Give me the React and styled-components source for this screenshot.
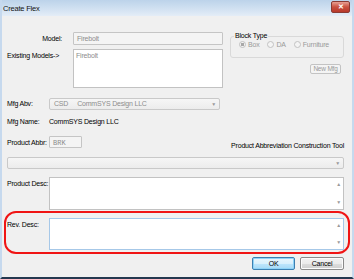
import React from 'react';
import styled, { createGlobalStyle } from 'styled-components';

const GlobalStyle = createGlobalStyle`
    body {
        margin: 0;
        font-family: "Liberation Sans", Arial, sans-serif;
        font-size: 7px;
        letter-spacing: -0.2px;
        background: #ffffff;
    }
`;

const Window = styled.div`
    width: 354px;
    height: 279px;
    box-sizing: border-box;
    display: flex;
    flex-direction: column;
    background: #f0f0f0;
    border-left: 2px solid #c6d9ee;
    border-right: 2px solid #c6d9ee;
    border-bottom: 2px solid #24384f;
    overflow: hidden;
    white-space: nowrap;
`;

const TitleBar = styled.div`
    height: 16px;
    flex: none;
    display: flex;
    align-items: center;
    justify-content: space-between;
    padding: 0 2px 0 1px;
    background: linear-gradient(#bcd3ea, #d3e2f2 60%, #e4edf7);
    font-size: 7.5px;
    color: #111;
`;

const CloseButton = styled.div`
    width: 17px;
    height: 10px;
    margin-top: -3px;
    border: 1px solid #8a3b34;
    border-radius: 2px;
    background: linear-gradient(#e8a093, #c9503f 50%, #b8382a);
    color: #fff;
    font-size: 7px;
    font-weight: bold;
    line-height: 10px;
    text-align: center;
`;

const Body = styled.div`
    flex: 1;
    display: flex;
    flex-direction: column;
    padding: 16px 8px 0 5px;
`;

const TopSection = styled.div`
    display: flex;
    gap: 7px;
`;

const LeftColumn = styled.div`
    display: flex;
    flex-direction: column;
    gap: 4px;
`;

const RightColumn = styled.div`
    flex: 1;
    display: flex;
    flex-direction: column;
    align-items: flex-end;
`;

const Row = styled.div`
    display: flex;
    align-items: ${p => p.$align || 'center'};
    margin-top: ${p => p.$top || 0}px;
`;

const Label = styled.div`
    width: ${p => p.$width || 42}px;
    flex: none;
    text-align: ${p => p.$right ? 'right' : 'left'};
    padding-right: ${p => p.$right ? 11 : 0}px;
    box-sizing: border-box;
    color: #000;
    line-height: 10px;
    align-self: ${p => p.$top ? 'flex-start' : 'auto'};
    padding-top: ${p => p.$top ? 2 : 0}px;
`;

const PlainText = styled.span`
    color: #000;
    line-height: 10px;
`;

const TextField = styled.div`
    width: ${p => p.$width}px;
    height: ${p => p.$height || 13}px;
    box-sizing: border-box;
    border: 1px solid #c5c5c5;
    border-radius: 1px;
    background: #f4f4f4;
    color: #8d8d8d;
    padding: 1px 3px;
    line-height: 10px;
    font-family: ${p => p.$mono ? '"Liberation Mono", monospace' : 'inherit'};
    letter-spacing: ${p => p.$mono ? '0' : 'inherit'};
`;

const TextArea = styled.div`
    width: ${p => p.$width ? `${p.$width}px` : 'auto'};
    flex: ${p => p.$width ? 'none' : 1};
    height: ${p => p.$height}px;
    box-sizing: border-box;
    border: 1px solid ${p => p.$focus ? '#a6c8e8' : '#c2c2c2'};
    background: #ffffff;
    color: #8d8d8d;
    padding: 1px 2px;
    line-height: 10px;
    display: flex;
`;

const AreaText = styled.div`
    flex: 1;
`;

const ScrollBar = styled.div`
    width: 9px;
    margin: -1px -2px -1px 0;
    display: flex;
    flex-direction: column;
    justify-content: space-between;
    align-items: center;
    padding: 4px 0 4px;
    color: #9a9a9a;
    font-size: 5px;
    line-height: 5px;
`;

const Select = styled.div`
    width: ${p => p.$width ? `${p.$width}px` : 'auto'};
    flex: ${p => p.$width ? 'none' : 1};
    height: 12px;
    box-sizing: border-box;
    border: 1px solid #c9c9c9;
    border-radius: 2px;
    background: linear-gradient(#f6f6f6, #ececec);
    color: #8d8d8d;
    display: flex;
    align-items: center;
    padding: 0 3px 0 4px;
    gap: 9px;
    line-height: 10px;
`;

const SelectArrow = styled.span`
    margin-left: auto;
    color: #9a9a9a;
    font-size: 5px;
`;

const GroupBox = styled.fieldset`
    width: 114px;
    height: 26px;
    box-sizing: border-box;
    margin: 0;
    padding: 1px 0 0 8px;
    border: 1px solid #d9d9d9;
    border-radius: 3px;
    display: flex;
    align-items: center;
    gap: 8px;
    legend {
        padding: 0 1px;
        margin-left: -5px;
        color: #000;
        line-height: 8px;
    }
`;

const Radio = styled.div`
    display: flex;
    align-items: center;
    gap: 2px;
    color: #9a9a9a;
`;

const RadioDot = styled.span`
    width: 7px;
    height: 7px;
    box-sizing: border-box;
    border-radius: 50%;
    border: 1px solid #c2c2c2;
    background: ${p => p.$checked ? 'radial-gradient(circle, #a8a8a8 0 1.6px, #f2f2f2 2px)' : '#f4f4f4'};
`;

const SmallButton = styled.div`
    margin-top: 6px;
    margin-right: 3px;
    width: 31px;
    height: 10px;
    box-sizing: border-box;
    border: 1px solid #c3c3c3;
    border-radius: 2px;
    background: #f4f4f4;
    color: #9a9a9a;
    font-size: 6.5px;
    line-height: 8px;
    text-align: center;
`;

const ToolLabel = styled.div`
    margin-left: auto;
    margin-bottom: -3px;
    color: #000;
    line-height: 10px;
`;

const Highlight = styled.div`
    margin: 1px -6px 0 -3px;
    border: 2px solid #f01414;
    border-radius: 12px;
    padding: 5px 4px 2px 1px;
    display: flex;
`;

const ButtonBar = styled.div`
    margin-top: 3px;
    display: flex;
    justify-content: flex-end;
    gap: 5px;
`;

const DialogButton = styled.div`
    width: ${p => p.$width}px;
    height: 13px;
    box-sizing: border-box;
    border: 1px solid ${p => p.$default ? '#3c7fb1' : '#8a8a8a'};
    border-radius: 2px;
    background: ${p => p.$default
        ? 'linear-gradient(#eaf6fd, #d9f0fc 50%, #bee6fd 51%, #a7d9f5)'
        : 'linear-gradient(#f2f2f2, #ebebeb 50%, #dddddd 51%, #cfcfcf)'};
    box-shadow: ${p => p.$default ? 'inset 0 0 0 1px #8fd3f8' : 'inset 0 0 0 1px #fcfcfc'};
    color: #000;
    font-size: 7px;
    line-height: 11px;
    text-align: center;
`;

const Scroll = () => (
    <ScrollBar>
        <span>▲</span>
        <span>▼</span>
    </ScrollBar>
);

export default function App() {
    return (
        <Window>
            <GlobalStyle />
            <TitleBar>
                <span>Create Flex</span>
                <CloseButton>✕</CloseButton>
            </TitleBar>
            <Body>
                <TopSection>
                    <LeftColumn>
                        <Row>
                            <Label $width={66} $right>Model:</Label>
                            <TextField $width={150}>Firebolt</TextField>
                        </Row>
                        <Row>
                            <Label $width={66} $top>Existing Models-&gt;</Label>
                            <TextArea $width={150} $height={39}>
                                <AreaText>Firebolt</AreaText>
                            </TextArea>
                        </Row>
                    </LeftColumn>
                    <RightColumn>
                        <GroupBox>
                            <legend>Block Type</legend>
                            <Radio><RadioDot $checked />Box</Radio>
                            <Radio><RadioDot />DA</Radio>
                            <Radio><RadioDot />Furniture</Radio>
                        </GroupBox>
                        <SmallButton>New Mfg</SmallButton>
                    </RightColumn>
                </TopSection>

                <Row $top={10}>
                    <Label>Mfg Abv:</Label>
                    <Select $width={171}>
                        <span>CSD</span>
                        <span>CommSYS Design LLC</span>
                        <SelectArrow>▼</SelectArrow>
                    </Select>
                </Row>

                <Row $top={7}>
                    <Label>Mfg Name:</Label>
                    <PlainText>CommSYS Design LLC</PlainText>
                </Row>

                <Row $top={9} $align="flex-end">
                    <Label>Product Abbr:</Label>
                    <TextField $width={33} $height={12} $mono>BRK</TextField>
                    <ToolLabel>Product Abbreviation Construction Tool</ToolLabel>
                </Row>

                <Row $top={9}>
                    <Select>
                        <SelectArrow>▼</SelectArrow>
                    </Select>
                </Row>

                <Row $top={8}>
                    <Label $top>Product Desc:</Label>
                    <TextArea $height={33}>
                        <AreaText />
                        <Scroll />
                    </TextArea>
                </Row>

                <Highlight>
                    <Label $top>Rev. Desc:</Label>
                    <TextArea $height={32} $focus>
                        <AreaText />
                        <Scroll />
                    </TextArea>
                </Highlight>

                <ButtonBar>
                    <DialogButton $width={43} $default>OK</DialogButton>
                    <DialogButton $width={44}>Cancel</DialogButton>
                </ButtonBar>
            </Body>
        </Window>
    );
}
